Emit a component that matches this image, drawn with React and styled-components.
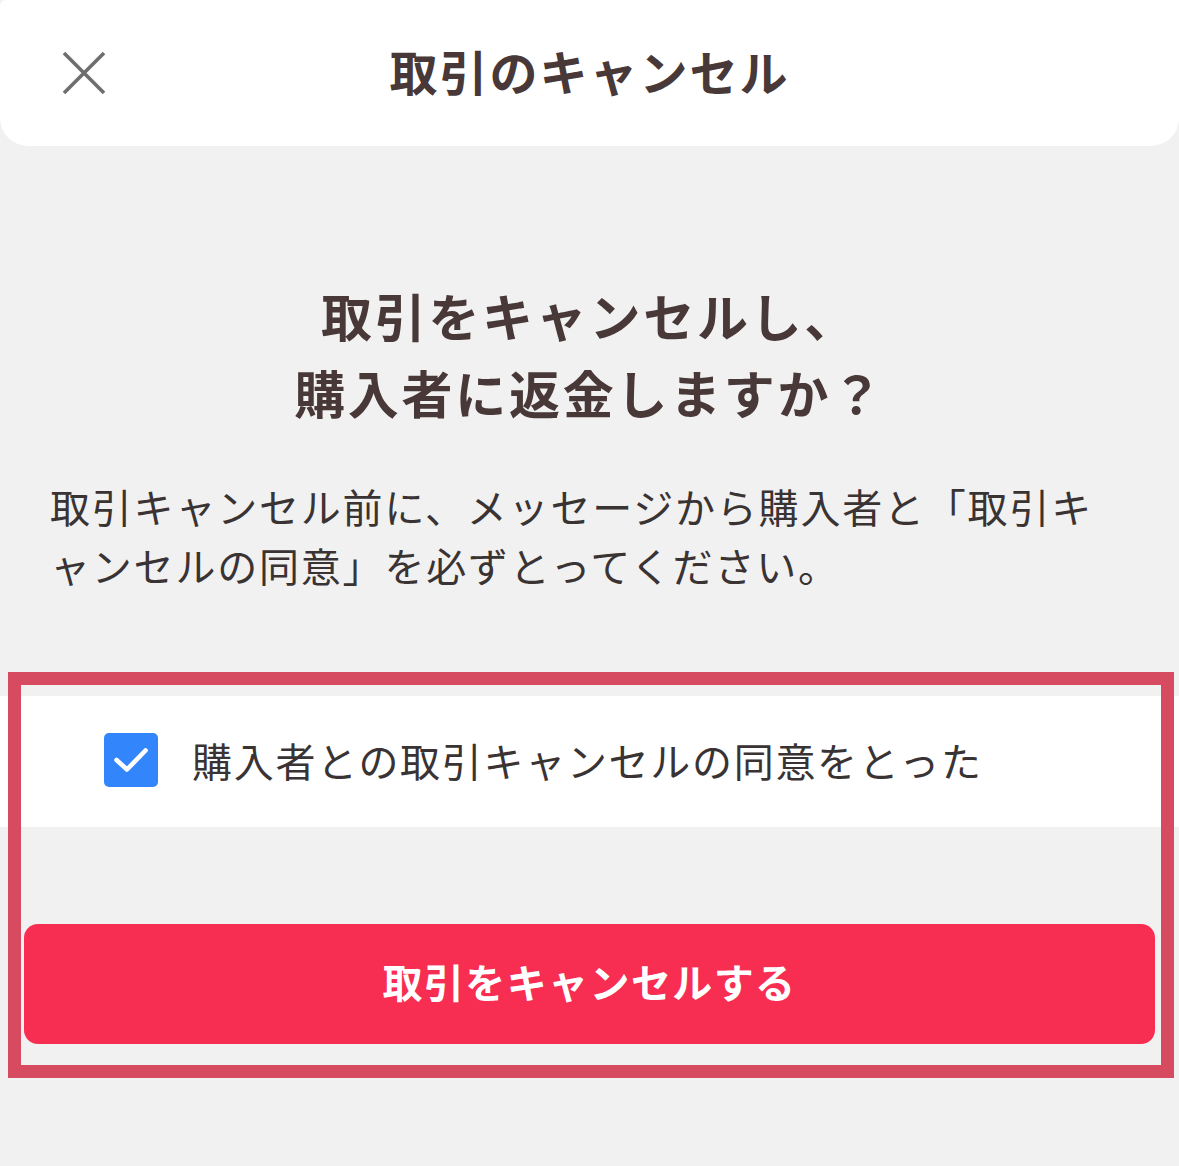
import styled, { createGlobalStyle } from "styled-components";

const GlobalStyle = createGlobalStyle`
  html, body {
    margin: 0;
    padding: 0;
    background: #f1f1f1;
  }
  body {
    font-family: "Noto Sans CJK JP", "Noto Sans", sans-serif;
    color: #483838;
  }
`;

const Page = styled.main`
  min-height: 1166px;
  box-sizing: border-box;
  background: #f1f1f1;
`;

const Header = styled.header`
  height: 146px;
  background: #ffffff;
  border-radius: 6px 0 28px 28px;
  display: grid;
  grid-template-columns: 168px 1fr 168px;
  align-items: center;
`;

const CloseButton = styled.button`
  border: none;
  background: none;
  padding: 0;
  margin-left: 62px;
  width: 44px;
  height: 44px;
  display: flex;
  cursor: pointer;
`;

const HeaderTitle = styled.h1`
  margin: 0;
  text-align: center;
  font-size: 48px;
  font-weight: 700;
  letter-spacing: 2px;
  line-height: 1;
  padding-bottom: 6px;
`;

const Question = styled.h2`
  margin: 131px 0 0;
  text-align: center;
  font-size: 51px;
  font-weight: 700;
  line-height: 77px;
  letter-spacing: 2.7px;
`;

const Notice = styled.p`
  margin: 46px 0 0;
  padding: 0 50px;
  font-size: 40px;
  font-weight: 400;
  line-height: 59px;
  letter-spacing: 1.8px;
  color: #3a3333;
  line-break: loose;
`;

const Section = styled.section`
  position: relative;
  margin-top: 77px;
  padding: 24px 0 34px;
`;

const Highlight = styled.div`
  position: absolute;
  top: 0;
  bottom: 0;
  left: 8px;
  right: 5px;
  border: 13px solid #d64b5f;
  pointer-events: none;
`;

const AgreeRow = styled.label`
  height: 131px;
  background: #ffffff;
  display: flex;
  align-items: center;
  padding-left: 104px;
  gap: 34px;
  cursor: pointer;
`;

const CheckBox = styled.span`
  width: 54px;
  height: 54px;
  border-radius: 5px;
  background: ${(p) => (p.$checked ? "#3385fc" : "#ffffff")};
  display: flex;
  flex-shrink: 0;
  margin-top: -3px;
`;

const AgreeText = styled.span`
  font-size: 40px;
  letter-spacing: 1.7px;
  color: #3a3333;
  line-height: 1;
  padding-bottom: 4px;
`;

const CancelButton = styled.button`
  display: block;
  box-sizing: border-box;
  margin: 97px 24px 0;
  width: calc(100% - 48px);
  height: 120px;
  padding: 0 0 6px;
  border: none;
  border-radius: 14px;
  background: #f72d51;
  color: #ffffff;
  font-family: "Noto Sans CJK JP", "Noto Sans", sans-serif;
  font-size: 40px;
  font-weight: 700;
  letter-spacing: 1.4px;
  cursor: pointer;
`;

const App = () => {
  return (
    <Page>
      <GlobalStyle />
      <Header>
        <CloseButton aria-label="閉じる">
          <svg width="44" height="44" viewBox="0 0 44 44">
            <path
              d="M2 2 L42 42 M42 2 L2 42"
              stroke="#6e6e6e"
              strokeWidth="3.6"
              fill="none"
            />
          </svg>
        </CloseButton>
        <HeaderTitle>取引のキャンセル</HeaderTitle>
        <div />
      </Header>
      <Question>
        取引をキャンセルし、
        <br />
        購入者に返金しますか？
      </Question>
      <Notice>
        取引キャンセル前に、メッセージから購入者と「取引キ
        <br />
        ャンセルの同意」を必ずとってください。
      </Notice>
      <Section>
        <AgreeRow>
          <CheckBox $checked>
            <svg width="54" height="54" viewBox="0 0 54 54">
              <path
                d="M12.5 27 L23 36.5 L41.5 17.5"
                stroke="#ffffff"
                strokeWidth="4.6"
                strokeLinecap="round"
                strokeLinejoin="round"
                fill="none"
              />
            </svg>
          </CheckBox>
          <AgreeText>購入者との取引キャンセルの同意をとった</AgreeText>
        </AgreeRow>
        <CancelButton>取引をキャンセルする</CancelButton>
        <Highlight />
      </Section>
    </Page>
  );
};

export default App;
